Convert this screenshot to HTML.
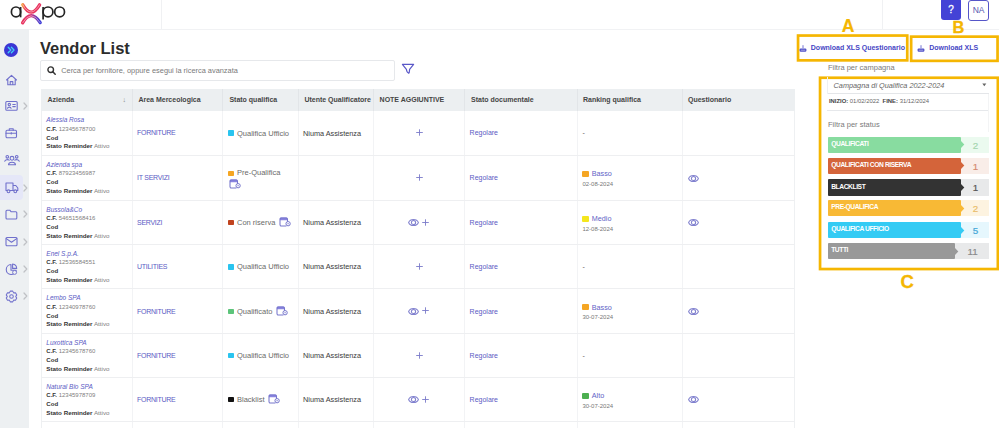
<!DOCTYPE html>
<html><head><meta charset="utf-8"><style>
html,body{margin:0;padding:0;width:999px;height:428px;overflow:hidden;background:#fff;font-family:"Liberation Sans",sans-serif;}
.t{position:absolute;white-space:nowrap;}
.r{position:absolute;}
svg.r{overflow:visible;}
</style></head><body>
<div class="r" style="left:0px;top:0px;width:999px;height:29px;background:#fff;"></div>
<div class="r" style="left:0px;top:28.6px;width:999px;height:1px;background:#f1f2f4;"></div>
<div class="r" style="left:161px;top:0px;width:1px;height:29px;background:#f0f1f3;"></div>
<div class="r" style="left:882px;top:0px;width:1px;height:29px;background:#f0f1f3;"></div>
<svg class="r" style="left:0px;top:0px" width="70" height="28" viewBox="0 0 70 28">
<defs><linearGradient id="g1" gradientUnits="userSpaceOnUse" x1="40" y1="5" x2="22" y2="23"><stop offset="0" stop-color="#ee3060"/><stop offset="1" stop-color="#e8305a"/></linearGradient>
<linearGradient id="g2" gradientUnits="userSpaceOnUse" x1="22" y1="4.5" x2="40" y2="5"><stop offset="0" stop-color="#f7a13a"/><stop offset="0.2" stop-color="#ee3a5a"/><stop offset="1" stop-color="#e8305e"/></linearGradient><linearGradient id="g3" gradientUnits="userSpaceOnUse" x1="22" y1="22" x2="40" y2="22"><stop offset="0" stop-color="#e8305a"/><stop offset="0.45" stop-color="#e03070"/><stop offset="1" stop-color="#3c3ad6"/></linearGradient></defs>
<ellipse cx="16" cy="11.9" rx="4.6" ry="4.9" fill="none" stroke="#242424" stroke-width="1.7"/>
<line x1="20.6" y1="7" x2="20.6" y2="17.3" stroke="#242424" stroke-width="1.7"/>
<path d="M22.8 4.8 Q31 19.5 39.6 4.8" fill="none" stroke="url(#g2)" stroke-width="3.3" stroke-linecap="round"/>
<path d="M22.6 22.8 Q31 8.5 40.2 22.6" fill="none" stroke="url(#g3)" stroke-width="3.3" stroke-linecap="round"/>
<path d="M22.8 4.8 Q31 19.5 39.6 4.8 M22.6 22.8 Q31 8.5 40.2 22.6" fill="none" stroke="#fff" stroke-opacity="0.6" stroke-width="0.8" stroke-linecap="round"/>
<ellipse cx="48" cy="11.9" rx="4.9" ry="4.9" fill="none" stroke="#242424" stroke-width="1.7"/>
<line x1="43.1" y1="7" x2="43.1" y2="19.6" stroke="#242424" stroke-width="1.7"/>
<ellipse cx="59.6" cy="11.9" rx="4.9" ry="4.9" fill="none" stroke="#242424" stroke-width="1.7"/>
</svg>
<div class="r" style="left:940.5px;top:-2px;width:20.8px;height:22.3px;background:#4343d6;border-radius:3px;"></div>
<div class="t" style="left:751.0px;width:400px;text-align:center;top:3.10px;font-size:10px;line-height:14px;color:#fff;font-weight:normal;font-style:normal;-webkit-text-stroke:0.3px #fff;">?</div>
<div class="r" style="left:968.2px;top:0px;width:20.7px;height:20.7px;background:#fff;border:1px solid #5656c8;border-radius:3px;box-sizing:border-box;"></div>
<div class="t" style="left:778.6px;width:400px;text-align:center;top:3.90px;font-size:8.5px;line-height:12px;color:#5858b0;font-weight:normal;font-style:normal;">NA</div>
<div class="r" style="left:0px;top:29px;width:29px;height:399px;background:#edf0f2;"></div>
<div class="r" style="left:0px;top:174.5px;width:22.5px;height:25.8px;background:#e5e7f8;border-radius:0 4px 4px 0;"></div>
<svg class="r" style="left:4px;top:43px;" width="14" height="14" viewBox="0 0 14 14"><circle cx="7" cy="7" r="7" fill="#3a36d4"/><path d="M4.2 4.3 L6.8 7 L4.2 9.7 M7.4 4.3 L10 7 L7.4 9.7" fill="none" stroke="#3fd0f5" stroke-width="1.3" stroke-linecap="round" stroke-linejoin="round"/></svg>
<svg class="r" style="left:5px;top:73.5px;" width="13" height="12" viewBox="0 0 13 12"><path d="M1.5 6 L6.5 1.3 L11.5 6 M2.8 4.8 V10.8 H10.2 V4.8 M5.2 10.8 V7.6 H7.8 V10.8" fill="none" stroke="#7070cc" stroke-width="1.1" stroke-linecap="round" stroke-linejoin="round"/></svg>
<svg class="r" style="left:5px;top:100px;" width="13" height="12" viewBox="0 0 13 12"><rect x="0.8" y="1.5" width="11.4" height="8.8" rx="1" fill="none" stroke="#7070cc" stroke-width="1.1" stroke-linecap="round" stroke-linejoin="round"/><circle cx="4.3" cy="4.6" r="1.2" fill="none" stroke="#7070cc" stroke-width="1.1" stroke-linecap="round" stroke-linejoin="round"/><path d="M2.5 8.3 C2.8 6.7 5.8 6.7 6.1 8.3 M7.8 4.5 H10.3 M7.8 6.6 H10.3" fill="none" stroke="#7070cc" stroke-width="1.1" stroke-linecap="round" stroke-linejoin="round"/></svg>
<svg class="r" style="left:5px;top:127px;" width="13" height="12" viewBox="0 0 13 12"><rect x="1" y="3.2" width="10.5" height="7.6" rx="1.2" fill="none" stroke="#7070cc" stroke-width="1.1" stroke-linecap="round" stroke-linejoin="round"/><path d="M4.3 3.2 V1.8 H8.2 V3.2 M1 6.3 H11.5 M6.25 5.6 V7" fill="none" stroke="#7070cc" stroke-width="1.1" stroke-linecap="round" stroke-linejoin="round"/></svg>
<svg class="r" style="left:3.5px;top:153.5px;" width="16" height="12" viewBox="0 0 16 12"><circle cx="8" cy="4.3" r="1.9" fill="none" stroke="#7070cc" stroke-width="1.1" stroke-linecap="round" stroke-linejoin="round"/><path d="M4.5 10.8 C4.7 7.4 11.3 7.4 11.5 10.8 Z" fill="none" stroke="#7070cc" stroke-width="1.1" stroke-linecap="round" stroke-linejoin="round"/><circle cx="3.3" cy="2.8" r="1.3" fill="none" stroke="#7070cc" stroke-width="1.1" stroke-linecap="round" stroke-linejoin="round"/><circle cx="12.7" cy="2.8" r="1.3" fill="none" stroke="#7070cc" stroke-width="1.1" stroke-linecap="round" stroke-linejoin="round"/><path d="M0.8 7.3 C1 5.5 4 5.2 5.2 6.2 M15.2 7.3 C15 5.5 12 5.2 10.8 6.2" fill="none" stroke="#7070cc" stroke-width="1.1" stroke-linecap="round" stroke-linejoin="round"/></svg>
<svg class="r" style="left:4.5px;top:181px;" width="14" height="13" viewBox="0 0 14 13"><path d="M1 2 H8 V9.5 H1 Z M8 4.5 H10.8 L12.8 7 V9.5 H8" fill="none" stroke="#7070cc" stroke-width="1.1" stroke-linecap="round" stroke-linejoin="round"/><circle cx="3.5" cy="10.3" r="1.4" fill="#edf0f2" stroke="#7070cc" stroke-width="1.1"/><circle cx="10.3" cy="10.3" r="1.4" fill="#edf0f2" stroke="#7070cc" stroke-width="1.1"/></svg>
<svg class="r" style="left:5px;top:208.5px;" width="13" height="11" viewBox="0 0 13 11"><path d="M1 2.2 Q1 1.2 2 1.2 H4.8 L6.2 2.8 H10.8 Q11.8 2.8 11.8 3.8 V9 Q11.8 10 10.8 10 H2 Q1 10 1 9 Z" fill="none" stroke="#7070cc" stroke-width="1.1" stroke-linecap="round" stroke-linejoin="round"/></svg>
<svg class="r" style="left:5px;top:236px;" width="13" height="11" viewBox="0 0 13 11"><rect x="1" y="1.5" width="11" height="8.3" rx="1" fill="none" stroke="#7070cc" stroke-width="1.1" stroke-linecap="round" stroke-linejoin="round"/><path d="M1.3 2.6 L6.5 6.2 L11.7 2.6" fill="none" stroke="#7070cc" stroke-width="1.1" stroke-linecap="round" stroke-linejoin="round"/></svg>
<svg class="r" style="left:5px;top:262.5px;" width="13" height="13" viewBox="0 0 13 13"><path d="M6 1.5 A5 5 0 1 0 11.2 7.2 L6 7.2 Z" fill="none" stroke="#7070cc" stroke-width="1.1" stroke-linecap="round" stroke-linejoin="round"/><path d="M7.6 1 A4.6 4.6 0 0 1 11.7 5.4 H7.6 Z" fill="none" stroke="#7070cc" stroke-width="1.1" stroke-linecap="round" stroke-linejoin="round"/><circle cx="9.6" cy="9.4" r="2" fill="#edf0f2" stroke="#7070cc" stroke-width="0.9"/></svg>
<svg class="r" style="left:4.5px;top:289.9px;" width="13" height="13" viewBox="0 0 13 13"><path d="M4.40 2.86 L5.26 1.14 L7.74 1.14 L8.60 2.86 L10.52 2.75 L11.76 4.89 L10.70 6.50 L11.76 8.11 L10.52 10.25 L8.60 10.14 L7.74 11.86 L5.26 11.86 L4.40 10.14 L2.48 10.25 L1.24 8.11 L2.30 6.50 L1.24 4.89 L2.48 2.75 Z" fill="none" stroke="#7070cc" stroke-width="1.05" stroke-linejoin="round"/><circle cx="6.5" cy="6.5" r="1.8" fill="none" stroke="#7070cc" stroke-width="1.05"/></svg>
<svg class="r" style="left:22.5px;top:101.8px;" width="5" height="8" viewBox="0 0 5 8"><path d="M1 1 L3.8 4 L1 7" fill="none" stroke="#bfc1c5" stroke-width="1.25" stroke-linecap="round" stroke-linejoin="round"/></svg>
<svg class="r" style="left:22.5px;top:183.5px;" width="5" height="8" viewBox="0 0 5 8"><path d="M1 1 L3.8 4 L1 7" fill="none" stroke="#bfc1c5" stroke-width="1.25" stroke-linecap="round" stroke-linejoin="round"/></svg>
<svg class="r" style="left:22.5px;top:210px;" width="5" height="8" viewBox="0 0 5 8"><path d="M1 1 L3.8 4 L1 7" fill="none" stroke="#bfc1c5" stroke-width="1.25" stroke-linecap="round" stroke-linejoin="round"/></svg>
<svg class="r" style="left:22.5px;top:237.6px;" width="5" height="8" viewBox="0 0 5 8"><path d="M1 1 L3.8 4 L1 7" fill="none" stroke="#bfc1c5" stroke-width="1.25" stroke-linecap="round" stroke-linejoin="round"/></svg>
<svg class="r" style="left:22.5px;top:264.6px;" width="5" height="8" viewBox="0 0 5 8"><path d="M1 1 L3.8 4 L1 7" fill="none" stroke="#bfc1c5" stroke-width="1.25" stroke-linecap="round" stroke-linejoin="round"/></svg>
<svg class="r" style="left:22.5px;top:292px;" width="5" height="8" viewBox="0 0 5 8"><path d="M1 1 L3.8 4 L1 7" fill="none" stroke="#bfc1c5" stroke-width="1.25" stroke-linecap="round" stroke-linejoin="round"/></svg>
<div class="t" style="left:40px;top:38.00px;font-size:16.5px;line-height:20px;color:#2c2c2c;font-weight:bold;font-style:normal;">Vendor List</div>
<div class="r" style="left:40.3px;top:60.2px;width:354.6px;height:20.6px;background:#fff;border:1px solid #e6e8eb;border-radius:2px;box-sizing:border-box;"></div>
<svg class="r" style="left:46.5px;top:65.6px;" width="9" height="9" viewBox="0 0 9 9"><circle cx="3.7" cy="3.7" r="2.8" fill="none" stroke="#333" stroke-width="1.4"/><path d="M5.8 5.8 L8.2 8.2" stroke="#333" stroke-width="1.5" stroke-linecap="round"/></svg>
<div class="t" style="left:61.2px;top:65.60px;font-size:7.4px;line-height:10px;color:#7a7a7a;font-weight:normal;font-style:normal;">Cerca per fornitore, oppure esegui la ricerca avanzata</div>
<svg class="r" style="left:401px;top:63px;" width="14" height="12" viewBox="0 0 14 12"><path d="M1.4 1.4 H12.6 L8.6 6.4 L8.2 9.6 Q8 10.4 7.3 9.9 L6.3 9 Q5.9 8.7 5.8 8 L5.4 6.4 Z" fill="none" stroke="#5a58c8" stroke-width="1.2" stroke-linejoin="round"/></svg>
<div class="r" style="left:40.8px;top:89px;width:754.2px;height:21.799999999999997px;background:#eceff1;"></div>
<div class="r" style="left:131.5px;top:89px;width:1px;height:21.799999999999997px;background:#e2e5e8;"></div>
<div class="r" style="left:222.2px;top:89px;width:1px;height:21.799999999999997px;background:#e2e5e8;"></div>
<div class="r" style="left:297.5px;top:89px;width:1px;height:21.799999999999997px;background:#e2e5e8;"></div>
<div class="r" style="left:373.2px;top:89px;width:1px;height:21.799999999999997px;background:#e2e5e8;"></div>
<div class="r" style="left:464.3px;top:89px;width:1px;height:21.799999999999997px;background:#e2e5e8;"></div>
<div class="r" style="left:576.7px;top:89px;width:1px;height:21.799999999999997px;background:#e2e5e8;"></div>
<div class="r" style="left:681.6px;top:89px;width:1px;height:21.799999999999997px;background:#e2e5e8;"></div>
<div class="t" style="left:47.4px;top:94.80px;font-size:7px;line-height:10px;color:#454545;font-weight:bold;font-style:normal;">Azienda</div>
<div class="t" style="left:138.4px;top:94.80px;font-size:7px;line-height:10px;color:#454545;font-weight:bold;font-style:normal;">Area Merceologica</div>
<div class="t" style="left:229.4px;top:94.80px;font-size:7px;line-height:10px;color:#454545;font-weight:bold;font-style:normal;">Stato qualifica</div>
<div class="t" style="left:304.4px;top:94.80px;font-size:7px;line-height:10px;color:#454545;font-weight:bold;font-style:normal;">Utente Qualificatore</div>
<div class="t" style="left:379.6px;top:94.80px;font-size:7px;line-height:10px;color:#454545;font-weight:bold;font-style:normal;">NOTE AGGIUNTIVE</div>
<div class="t" style="left:471px;top:94.80px;font-size:7px;line-height:10px;color:#454545;font-weight:bold;font-style:normal;">Stato documentale</div>
<div class="t" style="left:583px;top:94.80px;font-size:7px;line-height:10px;color:#454545;font-weight:bold;font-style:normal;">Ranking qualifica</div>
<div class="t" style="left:688px;top:94.80px;font-size:7px;line-height:10px;color:#454545;font-weight:bold;font-style:normal;">Questionario</div>
<div class="t" style="left:122.5px;top:94.80px;font-size:7px;line-height:10px;color:#8a8a8a;font-weight:normal;font-style:normal;">&#8595;</div>
<div class="r" style="left:40.8px;top:110.8px;width:1px;height:317.2px;background:#eef0f2;"></div>
<div class="r" style="left:794px;top:110.8px;width:1px;height:317.2px;background:#eef0f2;"></div>
<div class="r" style="left:131.5px;top:110.8px;width:1px;height:317.2px;background:#f2f3f5;"></div>
<div class="r" style="left:222.2px;top:110.8px;width:1px;height:317.2px;background:#f2f3f5;"></div>
<div class="r" style="left:297.5px;top:110.8px;width:1px;height:317.2px;background:#f2f3f5;"></div>
<div class="r" style="left:373.2px;top:110.8px;width:1px;height:317.2px;background:#f2f3f5;"></div>
<div class="r" style="left:464.3px;top:110.8px;width:1px;height:317.2px;background:#f2f3f5;"></div>
<div class="r" style="left:576.7px;top:110.8px;width:1px;height:317.2px;background:#f2f3f5;"></div>
<div class="r" style="left:681.6px;top:110.8px;width:1px;height:317.2px;background:#f2f3f5;"></div>
<div class="r" style="left:40.8px;top:155px;width:754.2px;height:1px;background:#eeeff1;"></div>
<div class="r" style="left:40.8px;top:200px;width:754.2px;height:1px;background:#eeeff1;"></div>
<div class="r" style="left:40.8px;top:244px;width:754.2px;height:1px;background:#eeeff1;"></div>
<div class="r" style="left:40.8px;top:288px;width:754.2px;height:1px;background:#eeeff1;"></div>
<div class="r" style="left:40.8px;top:333px;width:754.2px;height:1px;background:#eeeff1;"></div>
<div class="r" style="left:40.8px;top:377px;width:754.2px;height:1px;background:#eeeff1;"></div>
<div class="r" style="left:40.8px;top:421px;width:754.2px;height:1px;background:#eeeff1;"></div>
<div class="t" style="left:46.3px;top:115.30px;font-size:6.5px;line-height:9px;color:#5b5bc4;font-weight:normal;font-style:italic;">Alessia Rosa</div>
<div class="t" style="left:46.3px;top:124.70px;font-size:6.0px;line-height:8px;color:#333;font-weight:normal;font-style:normal;"><b style="color:#333">C.F.</b> <span style="color:#808080">12345678700</span></div>
<div class="t" style="left:46.3px;top:132.60px;font-size:6.1px;line-height:9px;color:#333;font-weight:normal;font-style:normal;"><b>Cod</b></div>
<div class="t" style="left:46.3px;top:140.90px;font-size:6.25px;line-height:9px;color:#333;font-weight:normal;font-style:normal;"><b>Stato Reminder</b> <span style="color:#808080">Attivo</span></div>
<div class="t" style="left:137px;top:128.45px;font-size:7px;line-height:10px;color:#5b5bc4;font-weight:normal;font-style:normal;letter-spacing:-0.27px;">FORNITURE</div>
<div class="r" style="left:228.3px;top:130.45000000000002px;width:5.6px;height:5.6px;background:#29c4ef;border-radius:0.8px;"></div>
<div class="t" style="left:237px;top:128.65px;font-size:7.5px;line-height:10px;color:#6a6a6a;font-weight:normal;font-style:normal;">Qualifica Ufficio</div>
<div class="t" style="left:303px;top:128.75px;font-size:7.3px;line-height:10px;color:#3a3a3a;font-weight:normal;font-style:normal;">Niuma Assistenza</div>
<svg class="r" style="left:415.5px;top:129.35px;" width="7" height="7" viewBox="0 0 7 7"><path d="M3.5 0.3 V6.7 M0.2 3.5 H6.8" stroke="#7a7aca" stroke-width="0.9"/></svg>
<div class="t" style="left:469.6px;top:128.45px;font-size:7px;line-height:10px;color:#5b5bc4;font-weight:normal;font-style:normal;">Regolare</div>
<div class="t" style="left:582.4px;top:128.15px;font-size:7px;line-height:10px;color:#555;font-weight:normal;font-style:normal;">-</div>
<div class="t" style="left:46.3px;top:160.00px;font-size:6.5px;line-height:9px;color:#5b5bc4;font-weight:normal;font-style:italic;">Azienda spa</div>
<div class="t" style="left:46.3px;top:169.40px;font-size:6.0px;line-height:8px;color:#333;font-weight:normal;font-style:normal;"><b style="color:#333">C.F.</b> <span style="color:#808080">87923456987</span></div>
<div class="t" style="left:46.3px;top:177.30px;font-size:6.1px;line-height:9px;color:#333;font-weight:normal;font-style:normal;"><b>Cod</b></div>
<div class="t" style="left:46.3px;top:185.60px;font-size:6.25px;line-height:9px;color:#333;font-weight:normal;font-style:normal;"><b>Stato Reminder</b> <span style="color:#808080">Attivo</span></div>
<div class="t" style="left:137px;top:173.30px;font-size:7px;line-height:10px;color:#5b5bc4;font-weight:normal;font-style:normal;letter-spacing:-0.27px;">IT SERVIZI</div>
<div class="r" style="left:228.3px;top:170.8px;width:5.6px;height:5.2px;background:#f5a623;border-radius:0.8px;"></div>
<div class="t" style="left:237px;top:168.10px;font-size:7.5px;line-height:10px;color:#6a6a6a;font-weight:normal;font-style:normal;">Pre-Qualifica</div>
<svg class="r" style="left:228.8px;top:178.7px;" width="12" height="10" viewBox="0 0 12 10"><path d="M1.6 0.6 H7.4 Q8.4 0.6 8.5 1.6 V3.3 H0.9 V1.6 Q1 0.6 1.6 0.6 Z" fill="#8a84e0"/><path d="M7 8.9 H2.4 Q1 8.9 1 7.5 V2.2 Q1 1 2.2 1 H7.3 Q8.5 1 8.5 2.2 V4.6" fill="none" stroke="#7676cc" stroke-width="1.05" stroke-linecap="round"/><circle cx="9.1" cy="6.7" r="2.15" fill="#fff" stroke="#7676cc" stroke-width="1"/><circle cx="9.1" cy="6.7" r="0.65" fill="#7676cc"/></svg>
<svg class="r" style="left:415.5px;top:174.2px;" width="7" height="7" viewBox="0 0 7 7"><path d="M3.5 0.3 V6.7 M0.2 3.5 H6.8" stroke="#7a7aca" stroke-width="0.9"/></svg>
<div class="t" style="left:469.6px;top:173.30px;font-size:7px;line-height:10px;color:#5b5bc4;font-weight:normal;font-style:normal;">Regolare</div>
<div class="r" style="left:582.4px;top:170.9px;width:6.2px;height:6.2px;background:#f5a623;border-radius:1px;"></div>
<div class="t" style="left:591.8px;top:169.10px;font-size:7.2px;line-height:10px;color:#6262c6;font-weight:normal;font-style:normal;">Basso</div>
<div class="t" style="left:582.4px;top:179.90px;font-size:6px;line-height:8px;color:#777;font-weight:normal;font-style:normal;">02-08-2024</div>
<svg class="r" style="left:687.5px;top:173.5px;" width="11" height="9" viewBox="0 0 11 9"><path d="M0.6 4.5 C2.2 0.4 8.8 0.4 10.4 4.5 C8.8 8.6 2.2 8.6 0.6 4.5 Z" fill="none" stroke="#8282cf" stroke-width="1.05" stroke-linejoin="round"/><circle cx="5.5" cy="4.5" r="2.1" fill="none" stroke="#8282cf" stroke-width="1.05"/></svg>
<div class="t" style="left:46.3px;top:205.00px;font-size:6.5px;line-height:9px;color:#5b5bc4;font-weight:normal;font-style:italic;">Bussola&amp;Co</div>
<div class="t" style="left:46.3px;top:214.40px;font-size:6.0px;line-height:8px;color:#333;font-weight:normal;font-style:normal;"><b style="color:#333">C.F.</b> <span style="color:#808080">54651568416</span></div>
<div class="t" style="left:46.3px;top:222.30px;font-size:6.1px;line-height:9px;color:#333;font-weight:normal;font-style:normal;"><b>Cod</b></div>
<div class="t" style="left:46.3px;top:230.60px;font-size:6.25px;line-height:9px;color:#333;font-weight:normal;font-style:normal;"><b>Stato Reminder</b> <span style="color:#808080">Attivo</span></div>
<div class="t" style="left:137px;top:217.80px;font-size:7px;line-height:10px;color:#5b5bc4;font-weight:normal;font-style:normal;letter-spacing:-0.27px;">SERVIZI</div>
<div class="r" style="left:228.3px;top:219.8px;width:5.6px;height:5.6px;background:#c0431e;border-radius:0.8px;"></div>
<div class="t" style="left:237px;top:218.00px;font-size:7.5px;line-height:10px;color:#6a6a6a;font-weight:normal;font-style:normal;">Con riserva</div>
<svg class="r" style="left:278.559375px;top:217.1px;" width="12" height="10" viewBox="0 0 12 10"><path d="M1.6 0.6 H7.4 Q8.4 0.6 8.5 1.6 V3.3 H0.9 V1.6 Q1 0.6 1.6 0.6 Z" fill="#8a84e0"/><path d="M7 8.9 H2.4 Q1 8.9 1 7.5 V2.2 Q1 1 2.2 1 H7.3 Q8.5 1 8.5 2.2 V4.6" fill="none" stroke="#7676cc" stroke-width="1.05" stroke-linecap="round"/><circle cx="9.1" cy="6.7" r="2.15" fill="#fff" stroke="#7676cc" stroke-width="1"/><circle cx="9.1" cy="6.7" r="0.65" fill="#7676cc"/></svg>
<div class="t" style="left:303px;top:218.10px;font-size:7.3px;line-height:10px;color:#3a3a3a;font-weight:normal;font-style:normal;">Niuma Assistenza</div>
<svg class="r" style="left:408.0px;top:218.0px;" width="11" height="9" viewBox="0 0 11 9"><path d="M0.6 4.5 C2.2 0.4 8.8 0.4 10.4 4.5 C8.8 8.6 2.2 8.6 0.6 4.5 Z" fill="none" stroke="#8282cf" stroke-width="1.05" stroke-linejoin="round"/><circle cx="5.5" cy="4.5" r="2.1" fill="none" stroke="#8282cf" stroke-width="1.05"/></svg>
<svg class="r" style="left:421.5px;top:218.7px;" width="7" height="7" viewBox="0 0 7 7"><path d="M3.5 0.3 V6.7 M0.2 3.5 H6.8" stroke="#7a7aca" stroke-width="0.9"/></svg>
<div class="t" style="left:469.6px;top:217.80px;font-size:7px;line-height:10px;color:#5b5bc4;font-weight:normal;font-style:normal;">Regolare</div>
<div class="r" style="left:582.4px;top:215.9px;width:6.2px;height:6.2px;background:#f4e61e;border-radius:1px;"></div>
<div class="t" style="left:591.8px;top:214.10px;font-size:7.2px;line-height:10px;color:#6262c6;font-weight:normal;font-style:normal;">Medio</div>
<div class="t" style="left:582.4px;top:224.90px;font-size:6px;line-height:8px;color:#777;font-weight:normal;font-style:normal;">12-08-2024</div>
<svg class="r" style="left:687.5px;top:218.0px;" width="11" height="9" viewBox="0 0 11 9"><path d="M0.6 4.5 C2.2 0.4 8.8 0.4 10.4 4.5 C8.8 8.6 2.2 8.6 0.6 4.5 Z" fill="none" stroke="#8282cf" stroke-width="1.05" stroke-linejoin="round"/><circle cx="5.5" cy="4.5" r="2.1" fill="none" stroke="#8282cf" stroke-width="1.05"/></svg>
<div class="t" style="left:46.3px;top:249.00px;font-size:6.5px;line-height:9px;color:#5b5bc4;font-weight:normal;font-style:italic;">Enel S.p.A.</div>
<div class="t" style="left:46.3px;top:258.40px;font-size:6.0px;line-height:8px;color:#333;font-weight:normal;font-style:normal;"><b style="color:#333">C.F.</b> <span style="color:#808080">12536584551</span></div>
<div class="t" style="left:46.3px;top:266.30px;font-size:6.1px;line-height:9px;color:#333;font-weight:normal;font-style:normal;"><b>Cod</b></div>
<div class="t" style="left:46.3px;top:274.60px;font-size:6.25px;line-height:9px;color:#333;font-weight:normal;font-style:normal;"><b>Stato Reminder</b> <span style="color:#808080">Attivo</span></div>
<div class="t" style="left:137px;top:262.00px;font-size:7px;line-height:10px;color:#5b5bc4;font-weight:normal;font-style:normal;letter-spacing:-0.27px;">UTILITIES</div>
<div class="r" style="left:228.3px;top:264.0px;width:5.6px;height:5.6px;background:#29c4ef;border-radius:0.8px;"></div>
<div class="t" style="left:237px;top:262.20px;font-size:7.5px;line-height:10px;color:#6a6a6a;font-weight:normal;font-style:normal;">Qualifica Ufficio</div>
<div class="t" style="left:303px;top:262.30px;font-size:7.3px;line-height:10px;color:#3a3a3a;font-weight:normal;font-style:normal;">Niuma Assistenza</div>
<svg class="r" style="left:415.5px;top:262.9px;" width="7" height="7" viewBox="0 0 7 7"><path d="M3.5 0.3 V6.7 M0.2 3.5 H6.8" stroke="#7a7aca" stroke-width="0.9"/></svg>
<div class="t" style="left:469.6px;top:262.00px;font-size:7px;line-height:10px;color:#5b5bc4;font-weight:normal;font-style:normal;">Regolare</div>
<div class="t" style="left:582.4px;top:261.70px;font-size:7px;line-height:10px;color:#555;font-weight:normal;font-style:normal;">-</div>
<div class="t" style="left:46.3px;top:293.40px;font-size:6.5px;line-height:9px;color:#5b5bc4;font-weight:normal;font-style:italic;">Lembo SPA</div>
<div class="t" style="left:46.3px;top:302.80px;font-size:6.0px;line-height:8px;color:#333;font-weight:normal;font-style:normal;"><b style="color:#333">C.F.</b> <span style="color:#808080">12340978760</span></div>
<div class="t" style="left:46.3px;top:310.70px;font-size:6.1px;line-height:9px;color:#333;font-weight:normal;font-style:normal;"><b>Cod</b></div>
<div class="t" style="left:46.3px;top:319.00px;font-size:6.25px;line-height:9px;color:#333;font-weight:normal;font-style:normal;"><b>Stato Reminder</b> <span style="color:#808080">Attivo</span></div>
<div class="t" style="left:137px;top:306.50px;font-size:7px;line-height:10px;color:#5b5bc4;font-weight:normal;font-style:normal;letter-spacing:-0.27px;">FORNITURE</div>
<div class="r" style="left:228.3px;top:308.5px;width:5.6px;height:5.6px;background:#5cc47a;border-radius:0.8px;"></div>
<div class="t" style="left:237px;top:306.70px;font-size:7.5px;line-height:10px;color:#6a6a6a;font-weight:normal;font-style:normal;">Qualificato</div>
<svg class="r" style="left:275.6375px;top:305.8px;" width="12" height="10" viewBox="0 0 12 10"><path d="M1.6 0.6 H7.4 Q8.4 0.6 8.5 1.6 V3.3 H0.9 V1.6 Q1 0.6 1.6 0.6 Z" fill="#8a84e0"/><path d="M7 8.9 H2.4 Q1 8.9 1 7.5 V2.2 Q1 1 2.2 1 H7.3 Q8.5 1 8.5 2.2 V4.6" fill="none" stroke="#7676cc" stroke-width="1.05" stroke-linecap="round"/><circle cx="9.1" cy="6.7" r="2.15" fill="#fff" stroke="#7676cc" stroke-width="1"/><circle cx="9.1" cy="6.7" r="0.65" fill="#7676cc"/></svg>
<div class="t" style="left:303px;top:306.80px;font-size:7.3px;line-height:10px;color:#3a3a3a;font-weight:normal;font-style:normal;">Niuma Assistenza</div>
<svg class="r" style="left:408.0px;top:306.7px;" width="11" height="9" viewBox="0 0 11 9"><path d="M0.6 4.5 C2.2 0.4 8.8 0.4 10.4 4.5 C8.8 8.6 2.2 8.6 0.6 4.5 Z" fill="none" stroke="#8282cf" stroke-width="1.05" stroke-linejoin="round"/><circle cx="5.5" cy="4.5" r="2.1" fill="none" stroke="#8282cf" stroke-width="1.05"/></svg>
<svg class="r" style="left:421.5px;top:307.4px;" width="7" height="7" viewBox="0 0 7 7"><path d="M3.5 0.3 V6.7 M0.2 3.5 H6.8" stroke="#7a7aca" stroke-width="0.9"/></svg>
<div class="t" style="left:469.6px;top:306.50px;font-size:7px;line-height:10px;color:#5b5bc4;font-weight:normal;font-style:normal;">Regolare</div>
<div class="r" style="left:582.4px;top:304.29999999999995px;width:6.2px;height:6.2px;background:#f5a623;border-radius:1px;"></div>
<div class="t" style="left:591.8px;top:302.50px;font-size:7.2px;line-height:10px;color:#6262c6;font-weight:normal;font-style:normal;">Basso</div>
<div class="t" style="left:582.4px;top:313.30px;font-size:6px;line-height:8px;color:#777;font-weight:normal;font-style:normal;">30-07-2024</div>
<svg class="r" style="left:687.5px;top:306.7px;" width="11" height="9" viewBox="0 0 11 9"><path d="M0.6 4.5 C2.2 0.4 8.8 0.4 10.4 4.5 C8.8 8.6 2.2 8.6 0.6 4.5 Z" fill="none" stroke="#8282cf" stroke-width="1.05" stroke-linejoin="round"/><circle cx="5.5" cy="4.5" r="2.1" fill="none" stroke="#8282cf" stroke-width="1.05"/></svg>
<div class="t" style="left:46.3px;top:338.00px;font-size:6.5px;line-height:9px;color:#5b5bc4;font-weight:normal;font-style:italic;">Luxottica SPA</div>
<div class="t" style="left:46.3px;top:347.40px;font-size:6.0px;line-height:8px;color:#333;font-weight:normal;font-style:normal;"><b style="color:#333">C.F.</b> <span style="color:#808080">12345678760</span></div>
<div class="t" style="left:46.3px;top:355.30px;font-size:6.1px;line-height:9px;color:#333;font-weight:normal;font-style:normal;"><b>Cod</b></div>
<div class="t" style="left:46.3px;top:363.60px;font-size:6.25px;line-height:9px;color:#333;font-weight:normal;font-style:normal;"><b>Stato Reminder</b> <span style="color:#808080">Attivo</span></div>
<div class="t" style="left:137px;top:350.80px;font-size:7px;line-height:10px;color:#5b5bc4;font-weight:normal;font-style:normal;letter-spacing:-0.27px;">FORNITURE</div>
<div class="r" style="left:228.3px;top:352.8px;width:5.6px;height:5.6px;background:#29c4ef;border-radius:0.8px;"></div>
<div class="t" style="left:237px;top:351.00px;font-size:7.5px;line-height:10px;color:#6a6a6a;font-weight:normal;font-style:normal;">Qualifica Ufficio</div>
<div class="t" style="left:303px;top:351.10px;font-size:7.3px;line-height:10px;color:#3a3a3a;font-weight:normal;font-style:normal;">Niuma Assistenza</div>
<svg class="r" style="left:415.5px;top:351.7px;" width="7" height="7" viewBox="0 0 7 7"><path d="M3.5 0.3 V6.7 M0.2 3.5 H6.8" stroke="#7a7aca" stroke-width="0.9"/></svg>
<div class="t" style="left:469.6px;top:350.80px;font-size:7px;line-height:10px;color:#5b5bc4;font-weight:normal;font-style:normal;">Regolare</div>
<div class="t" style="left:582.4px;top:350.50px;font-size:7px;line-height:10px;color:#555;font-weight:normal;font-style:normal;">-</div>
<div class="t" style="left:46.3px;top:382.00px;font-size:6.5px;line-height:9px;color:#5b5bc4;font-weight:normal;font-style:italic;">Natural Bio SPA</div>
<div class="t" style="left:46.3px;top:391.40px;font-size:6.0px;line-height:8px;color:#333;font-weight:normal;font-style:normal;"><b style="color:#333">C.F.</b> <span style="color:#808080">12345978709</span></div>
<div class="t" style="left:46.3px;top:399.30px;font-size:6.1px;line-height:9px;color:#333;font-weight:normal;font-style:normal;"><b>Cod</b></div>
<div class="t" style="left:46.3px;top:407.60px;font-size:6.25px;line-height:9px;color:#333;font-weight:normal;font-style:normal;"><b>Stato Reminder</b> <span style="color:#808080">Attivo</span></div>
<div class="t" style="left:137px;top:394.80px;font-size:7px;line-height:10px;color:#5b5bc4;font-weight:normal;font-style:normal;letter-spacing:-0.27px;">FORNITURE</div>
<div class="r" style="left:228.3px;top:396.8px;width:5.6px;height:5.6px;background:#111;border-radius:0.8px;"></div>
<div class="t" style="left:237px;top:395.00px;font-size:7.5px;line-height:10px;color:#6a6a6a;font-weight:normal;font-style:normal;">Blacklist</div>
<svg class="r" style="left:267.715625px;top:394.1px;" width="12" height="10" viewBox="0 0 12 10"><path d="M1.6 0.6 H7.4 Q8.4 0.6 8.5 1.6 V3.3 H0.9 V1.6 Q1 0.6 1.6 0.6 Z" fill="#8a84e0"/><path d="M7 8.9 H2.4 Q1 8.9 1 7.5 V2.2 Q1 1 2.2 1 H7.3 Q8.5 1 8.5 2.2 V4.6" fill="none" stroke="#7676cc" stroke-width="1.05" stroke-linecap="round"/><circle cx="9.1" cy="6.7" r="2.15" fill="#fff" stroke="#7676cc" stroke-width="1"/><circle cx="9.1" cy="6.7" r="0.65" fill="#7676cc"/></svg>
<div class="t" style="left:303px;top:395.10px;font-size:7.3px;line-height:10px;color:#3a3a3a;font-weight:normal;font-style:normal;">Niuma Assistenza</div>
<svg class="r" style="left:408.0px;top:395.0px;" width="11" height="9" viewBox="0 0 11 9"><path d="M0.6 4.5 C2.2 0.4 8.8 0.4 10.4 4.5 C8.8 8.6 2.2 8.6 0.6 4.5 Z" fill="none" stroke="#8282cf" stroke-width="1.05" stroke-linejoin="round"/><circle cx="5.5" cy="4.5" r="2.1" fill="none" stroke="#8282cf" stroke-width="1.05"/></svg>
<svg class="r" style="left:421.5px;top:395.7px;" width="7" height="7" viewBox="0 0 7 7"><path d="M3.5 0.3 V6.7 M0.2 3.5 H6.8" stroke="#7a7aca" stroke-width="0.9"/></svg>
<div class="t" style="left:469.6px;top:394.80px;font-size:7px;line-height:10px;color:#5b5bc4;font-weight:normal;font-style:normal;">Regolare</div>
<div class="r" style="left:582.4px;top:392.9px;width:6.2px;height:6.2px;background:#4caf50;border-radius:1px;"></div>
<div class="t" style="left:591.8px;top:391.10px;font-size:7.2px;line-height:10px;color:#6262c6;font-weight:normal;font-style:normal;">Alto</div>
<div class="t" style="left:582.4px;top:401.90px;font-size:6px;line-height:8px;color:#777;font-weight:normal;font-style:normal;">30-07-2024</div>
<svg class="r" style="left:687.5px;top:395.0px;" width="11" height="9" viewBox="0 0 11 9"><path d="M0.6 4.5 C2.2 0.4 8.8 0.4 10.4 4.5 C8.8 8.6 2.2 8.6 0.6 4.5 Z" fill="none" stroke="#8282cf" stroke-width="1.05" stroke-linejoin="round"/><circle cx="5.5" cy="4.5" r="2.1" fill="none" stroke="#8282cf" stroke-width="1.05"/></svg>
<div class="t" style="left:648.2px;width:400px;text-align:center;top:16.30px;font-size:17.6px;line-height:20px;color:#f5b602;font-weight:bold;font-style:normal;-webkit-text-stroke:0.2px #f2b600;">A</div>
<div class="t" style="left:758.3px;width:400px;text-align:center;top:17.40px;font-size:16.4px;line-height:20px;color:#f5b602;font-weight:bold;font-style:normal;-webkit-text-stroke:0.3px #f2b600;">B</div>
<div class="t" style="left:707.3px;width:400px;text-align:center;top:271.00px;font-size:18.5px;line-height:22px;color:#f5b602;font-weight:bold;font-style:normal;-webkit-text-stroke:0.3px #f2b600;">C</div>
<svg class="r" style="left:0px;top:0px;pointer-events:none;" width="999" height="428" viewBox="0 0 999 428"><rect x="798.05" y="35.55" width="109.20" height="24.80" fill="none" stroke="#f5b602" stroke-width="2.7"/></svg>
<svg class="r" style="left:0px;top:0px;pointer-events:none;" width="999" height="428" viewBox="0 0 999 428"><rect x="911.15" y="36.65" width="86.40" height="24.20" fill="none" stroke="#f5b602" stroke-width="2.7"/></svg>
<svg class="r" style="left:799px;top:44.6px;" width="8" height="7" viewBox="0 0 8 7"><path d="M4 0.2 V3.2" stroke="#5050c8" stroke-width="0.8"/><path d="M1.6 3.4 H6.4 Q7.3 3.4 7.4 4.6 V5.6 Q7.4 6.8 6.2 6.8 H1.8 Q0.6 6.8 0.6 5.6 V4.6 Q0.7 3.4 1.6 3.4 Z" fill="#5050c8"/><path d="M1.8 5.2 H6.2" stroke="#fff" stroke-width="0.6" stroke-opacity="0.8"/></svg>
<div class="t" style="left:810.8px;top:42.80px;font-size:7px;line-height:10px;color:#4646c4;font-weight:bold;font-style:normal;">Download XLS Questionario</div>
<svg class="r" style="left:917px;top:44.6px;" width="8" height="7" viewBox="0 0 8 7"><path d="M4 0.2 V3.2" stroke="#5050c8" stroke-width="0.8"/><path d="M1.6 3.4 H6.4 Q7.3 3.4 7.4 4.6 V5.6 Q7.4 6.8 6.2 6.8 H1.8 Q0.6 6.8 0.6 5.6 V4.6 Q0.7 3.4 1.6 3.4 Z" fill="#5050c8"/><path d="M1.8 5.2 H6.2" stroke="#fff" stroke-width="0.6" stroke-opacity="0.8"/></svg>
<div class="t" style="left:929.2px;top:42.80px;font-size:7px;line-height:10px;color:#4646c4;font-weight:bold;font-style:normal;">Download XLS</div>
<div class="t" style="left:827.9px;top:62.70px;font-size:7.5px;line-height:10px;color:#7a7a7a;font-weight:normal;font-style:normal;">Filtra per campagna</div>
<svg class="r" style="left:0px;top:0px;pointer-events:none;" width="999" height="428" viewBox="0 0 999 428"><rect x="820.05" y="77.75" width="177.80" height="191.30" fill="none" stroke="#f5b602" stroke-width="2.7"/></svg>
<div class="r" style="left:827.4px;top:93.4px;width:161.6px;height:1px;background:#e4e6e9;"></div>
<div class="r" style="left:827.4px;top:77px;width:1px;height:17px;background:#eef0f2;"></div>
<div class="t" style="left:833.6px;top:80.60px;font-size:7.3px;line-height:10px;color:#666;font-weight:normal;font-style:italic;">Campagna di Qualifica 2022-2024</div>
<svg class="r" style="left:981.5px;top:83px;" width="5" height="4" viewBox="0 0 5 4"><path d="M0.3 0.4 H4.3 L2.3 3.2 Z" fill="#666"/></svg>
<div class="t" style="left:828.9px;top:96.90px;font-size:5.9px;line-height:8px;color:#666;font-weight:normal;font-style:normal;"><b style="color:#444">INIZIO:</b> 01/02/2022&nbsp; <b style="color:#444">FINE:</b> 31/12/2024</div>
<div class="r" style="left:827.4px;top:110.4px;width:161.6px;height:1px;background:#e6e8eb;"></div>
<div class="r" style="left:988.3px;top:94px;width:1px;height:38px;background:#f3f4f5;"></div>
<div class="t" style="left:828px;top:119.90px;font-size:7.5px;line-height:10px;color:#7a7a7a;font-weight:normal;font-style:normal;">Filtra per status</div>
<div class="r" style="left:827.7px;top:136.8px;width:161.29999999999995px;height:16.3px;background:#ebfaef;"></div>
<div class="r" style="left:827.7px;top:136.8px;width:133.29999999999995px;height:16.3px;background:#88dca0;border-radius:1px;"></div>
<svg class="r" style="left:961px;top:141.4px;" width="4" height="7" viewBox="0 0 4 7"><path d="M0 0 L3.3 3.5 L0 7 Z" fill="#88dca0"/></svg>
<div class="t" style="left:831.2px;top:139.00px;font-size:6.7px;line-height:9px;color:#fff;font-weight:bold;font-style:normal;letter-spacing:-0.42px;">QUALIFICATI</div>
<div class="t" style="left:775.6px;width:400px;text-align:center;top:138.60px;font-size:9.8px;line-height:14px;color:#a5d6b0;font-weight:normal;font-style:normal;-webkit-text-stroke:0.2px #a5d6b0;">2</div>
<div class="r" style="left:827.7px;top:157.8px;width:161.29999999999995px;height:16.3px;background:#f9ede8;"></div>
<div class="r" style="left:827.7px;top:157.8px;width:133.29999999999995px;height:16.3px;background:#d4643a;border-radius:1px;"></div>
<svg class="r" style="left:961px;top:162.4px;" width="4" height="7" viewBox="0 0 4 7"><path d="M0 0 L3.3 3.5 L0 7 Z" fill="#d4643a"/></svg>
<div class="t" style="left:831.2px;top:160.00px;font-size:6.7px;line-height:9px;color:#fff;font-weight:bold;font-style:normal;letter-spacing:-0.42px;">QUALIFICATI CON RISERVA</div>
<div class="t" style="left:775.6px;width:400px;text-align:center;top:159.60px;font-size:9.8px;line-height:14px;color:#d58a70;font-weight:normal;font-style:normal;-webkit-text-stroke:0.2px #d58a70;">1</div>
<div class="r" style="left:827.7px;top:179.3px;width:161.29999999999995px;height:16.3px;background:#e8e9ea;"></div>
<div class="r" style="left:827.7px;top:179.3px;width:133.29999999999995px;height:16.3px;background:#333333;border-radius:1px;"></div>
<svg class="r" style="left:961px;top:183.9px;" width="4" height="7" viewBox="0 0 4 7"><path d="M0 0 L3.3 3.5 L0 7 Z" fill="#333333"/></svg>
<div class="t" style="left:831.2px;top:181.50px;font-size:6.7px;line-height:9px;color:#fff;font-weight:bold;font-style:normal;letter-spacing:-0.42px;">BLACKLIST</div>
<div class="t" style="left:775.6px;width:400px;text-align:center;top:181.10px;font-size:9.8px;line-height:14px;color:#555;font-weight:normal;font-style:normal;-webkit-text-stroke:0.2px #555;">1</div>
<div class="r" style="left:827.7px;top:200.1px;width:161.29999999999995px;height:16.3px;background:#fdf3e0;"></div>
<div class="r" style="left:827.7px;top:200.1px;width:133.29999999999995px;height:16.3px;background:#f8b935;border-radius:1px;"></div>
<svg class="r" style="left:961px;top:204.7px;" width="4" height="7" viewBox="0 0 4 7"><path d="M0 0 L3.3 3.5 L0 7 Z" fill="#f8b935"/></svg>
<div class="t" style="left:831.2px;top:202.30px;font-size:6.7px;line-height:9px;color:#fff;font-weight:bold;font-style:normal;letter-spacing:-0.42px;">PRE-QUALIFICA</div>
<div class="t" style="left:775.6px;width:400px;text-align:center;top:201.90px;font-size:9.8px;line-height:14px;color:#e9bd6a;font-weight:normal;font-style:normal;-webkit-text-stroke:0.2px #e9bd6a;">2</div>
<div class="r" style="left:827.7px;top:221.9px;width:161.29999999999995px;height:16.3px;background:#e6f7fd;"></div>
<div class="r" style="left:827.7px;top:221.9px;width:133.29999999999995px;height:16.3px;background:#34cbf4;border-radius:1px;"></div>
<svg class="r" style="left:961px;top:226.5px;" width="4" height="7" viewBox="0 0 4 7"><path d="M0 0 L3.3 3.5 L0 7 Z" fill="#34cbf4"/></svg>
<div class="t" style="left:831.2px;top:224.10px;font-size:6.7px;line-height:9px;color:#fff;font-weight:bold;font-style:normal;letter-spacing:-0.42px;">QUALIFICA UFFICIO</div>
<div class="t" style="left:775.6px;width:400px;text-align:center;top:223.70px;font-size:9.8px;line-height:14px;color:#45a8d8;font-weight:normal;font-style:normal;-webkit-text-stroke:0.2px #45a8d8;">5</div>
<div class="r" style="left:827.7px;top:242.9px;width:161.29999999999995px;height:16.3px;background:#e8e9ea;"></div>
<div class="r" style="left:827.7px;top:242.9px;width:127.29999999999995px;height:16.3px;background:#999999;border-radius:1px;"></div>
<svg class="r" style="left:955px;top:247.5px;" width="4" height="7" viewBox="0 0 4 7"><path d="M0 0 L3.3 3.5 L0 7 Z" fill="#999999"/></svg>
<div class="t" style="left:831.2px;top:245.10px;font-size:6.7px;line-height:9px;color:#fff;font-weight:bold;font-style:normal;letter-spacing:-0.42px;">TUTTI</div>
<div class="t" style="left:772.6px;width:400px;text-align:center;top:244.70px;font-size:9.8px;line-height:14px;color:#8a8a8a;font-weight:normal;font-style:normal;-webkit-text-stroke:0.2px #8a8a8a;">11</div>
</body></html>
